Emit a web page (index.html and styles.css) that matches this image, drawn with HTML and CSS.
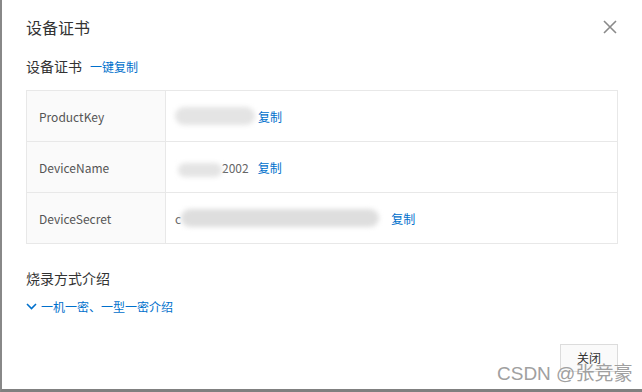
FILE: index.html
```html
<!DOCTYPE html>
<html lang="zh-CN">
<head>
<meta charset="utf-8">
<link rel="stylesheet" href="styles.css">
</head>
<body>
<div class="page">
  <div class="dialog">
    <div class="header">
      <div class="title">设备证书</div>
      <svg class="close" width="14" height="14" viewBox="0 0 14 14"><path d="M1 1L13 13M13 1L1 13" stroke="#8a8a8a" stroke-width="1.6" fill="none"/></svg>
    </div>
    <div class="sub">
      <span class="sub-label">设备证书</span>
      <a class="link">一键复制</a>
    </div>
    <div class="table">
      <div class="row">
        <div class="key">ProductKey</div>
        <div class="val"><span class="blob b1"></span><a class="link">复制</a></div>
      </div>
      <div class="row">
        <div class="key">DeviceName</div>
        <div class="val"><span class="blob b2"></span><span class="frag">2002</span><a class="link gap">复制</a></div>
      </div>
      <div class="row">
        <div class="key">DeviceSecret</div>
        <div class="val"><span class="frag c">c</span><span class="blob b3"></span><a class="link gap2">复制</a></div>
      </div>
    </div>
    <div class="section">烧录方式介绍</div>
    <div class="toggle">
      <svg class="chev" width="11" height="7" viewBox="0 0 11 7"><path d="M1 1L5.5 5.5L10 1" stroke="#0070cc" stroke-width="1.6" fill="none"/></svg>
      <a class="link">一机一密、一型一密介绍</a>
    </div>
    <div class="footer">
      <button class="btn">关闭</button>
    </div>
  </div>
  <div class="watermark">CSDN @张竞豪</div>
</div>
</body>
</html>
```
FILE: styles.css
```css
html, body {
  margin: 0;
  padding: 0;
  background: #fff;
}
body {
  width: 642px;
  height: 392px;
  overflow: hidden;
  font-family: "Noto Sans CJK SC", "Noto Sans", sans-serif;
  color: #333;
}
.page {
  position: relative;
  width: 640px;
  height: 389px;
  border-left: 2px solid #888;
  border-bottom: 3px solid #808080;
  background: #fff;
}
.dialog {
  padding: 0 24px;
}
.header {
  display: flex;
  justify-content: space-between;
  align-items: flex-start;
  height: 54px;
}
.title {
  font-size: 16px;
  line-height: 24px;
  padding-top: 15px;
  color: #333;
}
.close {
  margin-top: 20px;
  margin-right: 1px;
}
.sub {
  display: flex;
  align-items: center;
  height: 23px;
}
.sub-label {
  font-size: 14px;
  color: #333;
}
.link {
  color: #0070cc;
  font-size: 12px;
  text-decoration: none;
}
.sub .link {
  margin-left: 8px;
  margin-top: 1px;
}
.table {
  margin-top: 13px;
  border: 1px solid #e8e8e8;
}
.row {
  display: flex;
  height: 50px;
  border-top: 1px solid #e8e8e8;
}
.row:first-child {
  border-top: none;
}
.key {
  width: 126px;
  padding-left: 12px;
  background: #fafafa;
  border-right: 1px solid #e8e8e8;
  font-size: 12px;
  color: #555;
  display: flex;
  align-items: center;
}
.val {
  flex: 1;
  display: flex;
  align-items: center;
  padding-left: 9px;
  font-size: 12px;
}
.blob {
  display: inline-block;
  height: 18px;
  background: #e2e2e2;
  border-radius: 9px;
  filter: blur(2.5px);
}
.b1 {
  width: 80px;
  margin-right: 3px;
  background: #e4e4e4;
}
.b2 {
  width: 44px;
  margin-left: 3px;
  height: 14px;
  margin-top: 6px;
  background: #e4e4e4;
}
.b3 {
  width: 198px;
  background: #dedede;
}
.frag {
  color: #666;
  font-size: 12px;
}
.gap {
  margin-left: 9px;
}
.gap2 {
  margin-left: 12px;
}
.section {
  margin-top: 23px;
  font-size: 14px;
  line-height: 22px;
  color: #333;
}
.toggle {
  display: flex;
  align-items: center;
  margin-top: 7px;
  height: 20px;
}
.chev {
  margin-right: 4px;
}
.footer {
  display: flex;
  justify-content: flex-end;
  margin-top: 28px;
}
.btn {
  width: 58px;
  height: 28px;
  border: 1px solid #dcdcdc;
  background: #fafafa;
  font-family: "Noto Sans CJK SC", sans-serif;
  font-size: 12px;
  line-height: 26px;
  color: #333;
  padding: 0;
}
.watermark {
  position: absolute;
  left: 495px;
  top: 358px;
  font-family: "Liberation Sans", "Noto Sans CJK SC", sans-serif;
  font-size: 19px;
  color: #a0a0a0;
  white-space: nowrap;
}
```
